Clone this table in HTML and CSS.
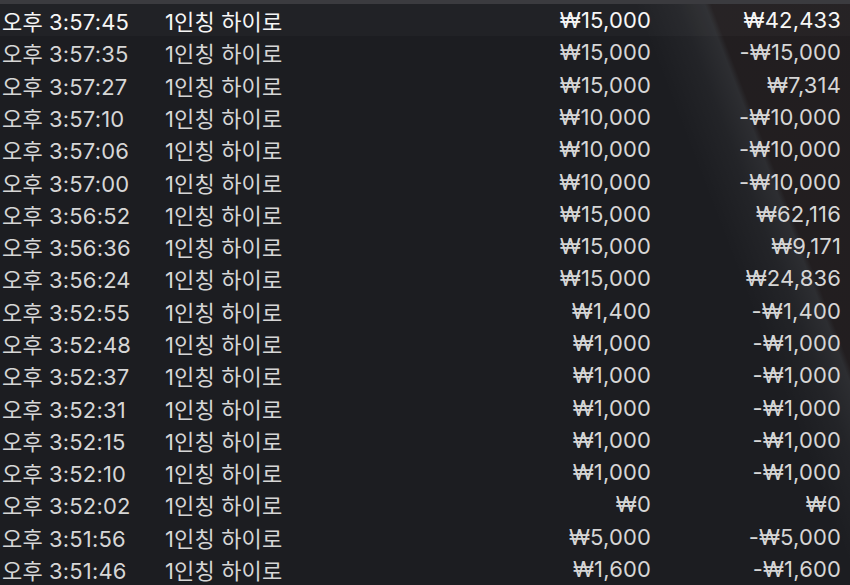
FILE: index.html
```html
<!DOCTYPE html>
<html lang="ko">

<head>
    <meta charset="UTF-8">
    <meta name="viewport" content="width=device-width, initial-scale=1.0">
    <title>베팅 내역</title>
    <link rel="stylesheet" href="styles.css">
</head>

<body>
    <div class="history">
        <div class="head-strip"></div>

        <div class="row current">
            <span class="time">오후 3:57:45</span>
            <span class="game">1인칭 하이로</span>
            <span class="bet">₩15,000</span>
            <span class="result">₩42,433</span>
        </div>
        <div class="row">
            <span class="time">오후 3:57:35</span>
            <span class="game">1인칭 하이로</span>
            <span class="bet">₩15,000</span>
            <span class="result">-₩15,000</span>
        </div>
        <div class="row">
            <span class="time">오후 3:57:27</span>
            <span class="game">1인칭 하이로</span>
            <span class="bet">₩15,000</span>
            <span class="result">₩7,314</span>
        </div>
        <div class="row">
            <span class="time">오후 3:57:10</span>
            <span class="game">1인칭 하이로</span>
            <span class="bet">₩10,000</span>
            <span class="result">-₩10,000</span>
        </div>
        <div class="row">
            <span class="time">오후 3:57:06</span>
            <span class="game">1인칭 하이로</span>
            <span class="bet">₩10,000</span>
            <span class="result">-₩10,000</span>
        </div>
        <div class="row">
            <span class="time">오후 3:57:00</span>
            <span class="game">1인칭 하이로</span>
            <span class="bet">₩10,000</span>
            <span class="result">-₩10,000</span>
        </div>
        <div class="row">
            <span class="time">오후 3:56:52</span>
            <span class="game">1인칭 하이로</span>
            <span class="bet">₩15,000</span>
            <span class="result">₩62,116</span>
        </div>
        <div class="row">
            <span class="time">오후 3:56:36</span>
            <span class="game">1인칭 하이로</span>
            <span class="bet">₩15,000</span>
            <span class="result">₩9,171</span>
        </div>
        <div class="row">
            <span class="time">오후 3:56:24</span>
            <span class="game">1인칭 하이로</span>
            <span class="bet">₩15,000</span>
            <span class="result">₩24,836</span>
        </div>
        <div class="row">
            <span class="time">오후 3:52:55</span>
            <span class="game">1인칭 하이로</span>
            <span class="bet">₩1,400</span>
            <span class="result">-₩1,400</span>
        </div>
        <div class="row">
            <span class="time">오후 3:52:48</span>
            <span class="game">1인칭 하이로</span>
            <span class="bet">₩1,000</span>
            <span class="result">-₩1,000</span>
        </div>
        <div class="row">
            <span class="time">오후 3:52:37</span>
            <span class="game">1인칭 하이로</span>
            <span class="bet">₩1,000</span>
            <span class="result">-₩1,000</span>
        </div>
        <div class="row">
            <span class="time">오후 3:52:31</span>
            <span class="game">1인칭 하이로</span>
            <span class="bet">₩1,000</span>
            <span class="result">-₩1,000</span>
        </div>
        <div class="row">
            <span class="time">오후 3:52:15</span>
            <span class="game">1인칭 하이로</span>
            <span class="bet">₩1,000</span>
            <span class="result">-₩1,000</span>
        </div>
        <div class="row">
            <span class="time">오후 3:52:10</span>
            <span class="game">1인칭 하이로</span>
            <span class="bet">₩1,000</span>
            <span class="result">-₩1,000</span>
        </div>
        <div class="row">
            <span class="time">오후 3:52:02</span>
            <span class="game">1인칭 하이로</span>
            <span class="bet">₩0</span>
            <span class="result">₩0</span>
        </div>
        <div class="row">
            <span class="time">오후 3:51:56</span>
            <span class="game">1인칭 하이로</span>
            <span class="bet">₩5,000</span>
            <span class="result">-₩5,000</span>
        </div>
        <div class="row">
            <span class="time">오후 3:51:46</span>
            <span class="game">1인칭 하이로</span>
            <span class="bet">₩1,600</span>
            <span class="result">-₩1,600</span>
        </div>
    </div>
</body>

</html>
```

FILE: styles.css
```css
html,
body {
    margin: 0;
    padding: 0;
    overflow: hidden;
    background-color: #1c1d21;
}

body {
    color: #d6d6d6;
    font-family: "Inter", "Noto Sans CJK KR", sans-serif;
    font-size: 22px;
    letter-spacing: 0.15px;
}

/* dark felt with a light streak running down the right side */
.history {
    display: flex;
    flex-direction: column;
    height: 585px;
    background-color: #1c1d21;
    background-image:
        linear-gradient(69deg,
            rgba(255, 255, 255, 0) 0,
            rgba(255, 255, 255, 0) 800px,
            rgba(255, 255, 255, 0.03) 840px,
            rgba(255, 255, 255, 0.075) 866px,
            rgba(45, 32, 30, 0.35) 872px,
            rgba(45, 32, 30, 0.3) 100%);
}

.head-strip {
    height: 4px;
    background-color: #3b3b3f;
}

.row {
    display: grid;
    grid-template-columns: 163px 1fr 110px 190px;
    align-items: center;
    height: 32.3px;
    padding: 0 9px 0 2px;
    white-space: nowrap;
}

.row.current {
    background-color: rgba(255, 255, 255, 0.025);
    color: #f6f6f6;
}

.bet,
.result {
    text-align: right;
}
```
